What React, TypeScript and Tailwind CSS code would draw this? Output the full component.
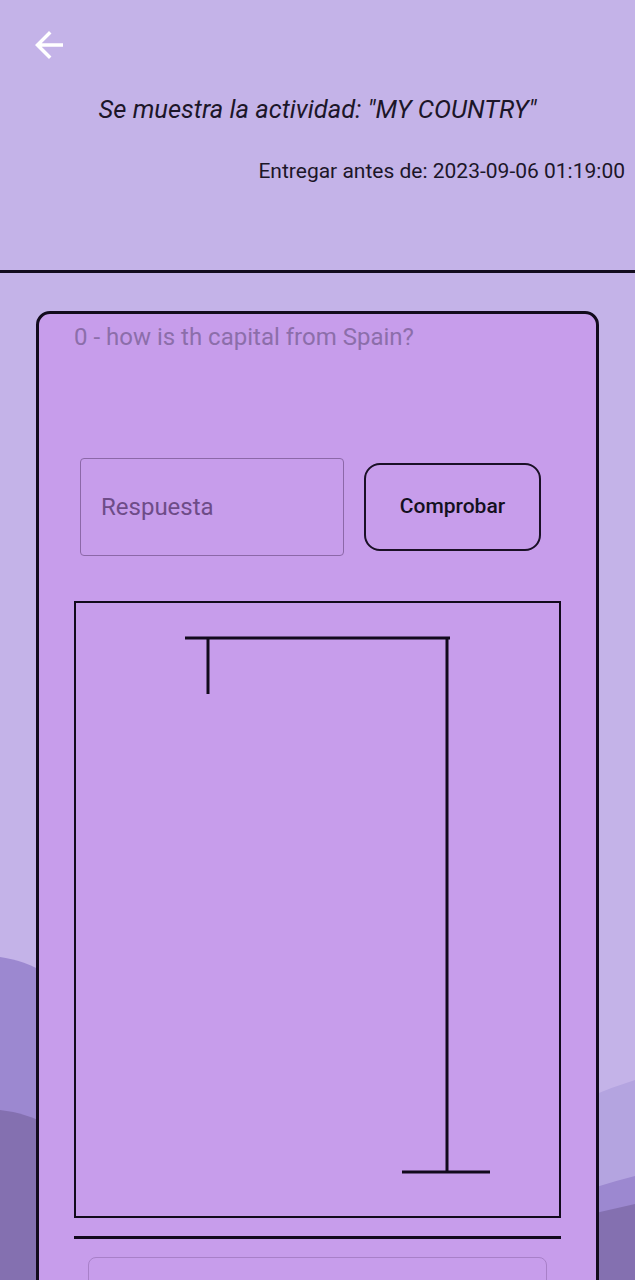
import { useState } from "react";

// waves behind the content, bottom of the screen
function Waves() {
    return <svg className="absolute inset-0 w-full h-full" viewBox="0 0 635 1280" preserveAspectRatio="none">
        <path d="M540 1120 Q590 1094 635 1080 L635 1280 L540 1280 Z" fill="#b4a4e0" />
        <path d="M0 957 C15 959 32 964 50 976 L50 1280 L0 1280 Z" fill="#9c88d0" />
        <path d="M560 1200 Q595 1186 635 1176 L635 1280 L560 1280 Z" fill="#9c88d0" />
        <path d="M0 1110 C18 1112 34 1117 50 1126 L50 1280 L0 1280 Z" fill="#8470b0" />
        <path d="M560 1222 Q598 1212 635 1204 L635 1280 L560 1280 Z" fill="#8470b0" />
    </svg>
}

function Gallows() {
    return <svg className="w-full h-full" viewBox="0 0 483 613" fill="none" stroke="#120a1c" strokeWidth={3}>
        <line x1="109" y1="35" x2="374" y2="35" />
        <line x1="132" y1="35" x2="132" y2="91" />
        <line x1="371" y1="35" x2="371" y2="570" />
        <line x1="326" y1="569" x2="414" y2="569" />
    </svg>
}

export default function App() {
    const [answer, setAnswer] = useState("");

    return <div className="relative h-[1280px] overflow-hidden bg-[#c4b3e8] font-['Roboto',sans-serif]">
        <Waves />
        <div className="relative">
            {/* header */}
            <div className="h-[270px] flex flex-col">
                <button className="mt-[24px] ml-[28px] w-[42px] h-[42px] text-white">
                    <svg viewBox="0 0 24 24" fill="currentColor" className="w-[42px] h-[42px]">
                        <path d="M20 11H7.83l5.59-5.59L12 4l-8 8 8 8 1.41-1.41L7.83 13H20v-2z" />
                    </svg>
                </button>
                <p className="mt-[27px] text-center italic text-[25.5px] leading-[32px] text-[#1c1628]">Se muestra la actividad: "MY COUNTRY"</p>
                <p className="mt-[32px] pr-[10px] text-right text-[21px] leading-[28px] text-[#1c1628]">Entregar antes de: 2023-09-06 01:19:00</p>
            </div>
            <div className="h-[3px] bg-[#120c1e]"></div>

            {/* activity card */}
            <div className="mt-[38px] mx-[36px] h-[1000px] rounded-[14px] border-[3px] border-[#120a1c] bg-[#c79deb] pl-[35px] pr-[35px] pt-[7px]">
                <p className="text-[24px] leading-[32px] text-[#8c6eaa]">0 - how is th capital from Spain?</p>
                <div className="mt-[105px] flex items-center gap-[20px] pl-[6px]">
                    <input
                        value={answer}
                        onChange={(e) => setAnswer(e.target.value)}
                        placeholder="Respuesta"
                        className="w-[264px] h-[98px] rounded-[4px] border border-[#8c68a8] bg-transparent px-[20px] text-[24px] text-[#3a2450] placeholder:text-[#6e4c88] outline-none"
                    />
                    <button className="w-[177px] h-[88px] rounded-[16px] border-2 border-[#1a1026] text-[21px] font-medium text-[#141020]">Comprobar</button>
                </div>
                <div className="mt-[45px] h-[617px] border-2 border-[#120a1c]">
                    <Gallows />
                </div>
                <div className="mt-[18px] h-[3px] bg-[#120a1c]"></div>
                <div className="mt-[18px] mx-[14px] h-[80px] rounded-[8px] border border-[#a880c8]"></div>
            </div>
        </div>
    </div>
}
